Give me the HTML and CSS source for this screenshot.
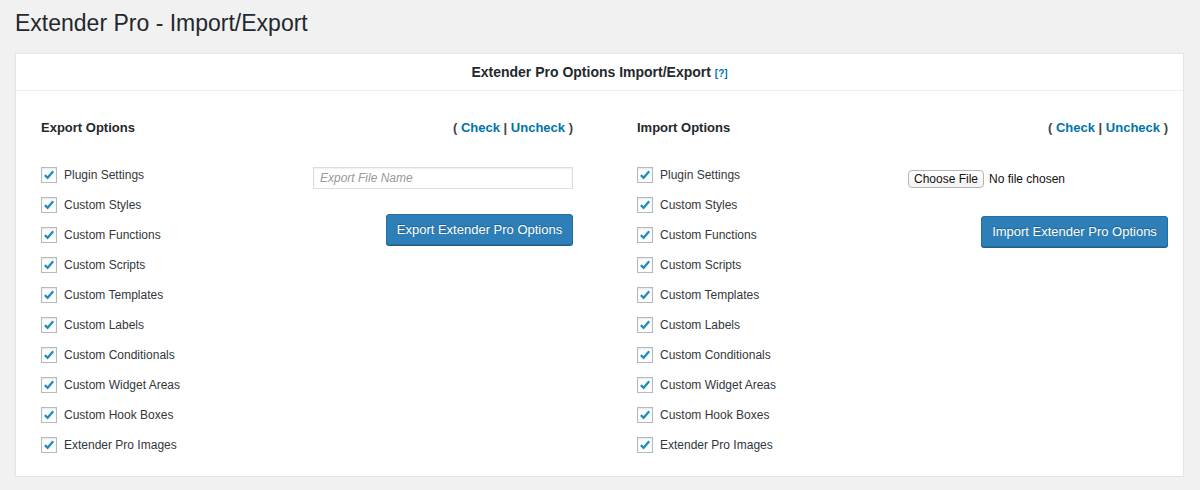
FILE: index.html
```html
<!DOCTYPE html>
<html>
<head>
<meta charset="utf-8">
<link rel="stylesheet" href="styles.css">
</head>
<body>
<div class="wrap">
  <h1 class="page-title">Extender Pro - Import/Export</h1>
  <div class="postbox">
    <div class="postbox-head">Extender Pro Options Import/Export <a class="help" href="#">[?]</a></div>
    <div class="postbox-body">
      <div class="col">
        <div class="col-head">
          <span class="col-title">Export Options</span>
          <span class="toggles">( <a href="#">Check</a> | <a href="#">Uncheck</a> )</span>
        </div>
        <div class="col-body">
          <ul class="opts">
            <li><span class="cb"><svg viewBox="0 0 16 16"><path d="M3.3 8.2 L6.4 11.2 L12.8 3.8"/></svg></span>Plugin Settings</li>
            <li><span class="cb"><svg viewBox="0 0 16 16"><path d="M3.3 8.2 L6.4 11.2 L12.8 3.8"/></svg></span>Custom Styles</li>
            <li><span class="cb"><svg viewBox="0 0 16 16"><path d="M3.3 8.2 L6.4 11.2 L12.8 3.8"/></svg></span>Custom Functions</li>
            <li><span class="cb"><svg viewBox="0 0 16 16"><path d="M3.3 8.2 L6.4 11.2 L12.8 3.8"/></svg></span>Custom Scripts</li>
            <li><span class="cb"><svg viewBox="0 0 16 16"><path d="M3.3 8.2 L6.4 11.2 L12.8 3.8"/></svg></span>Custom Templates</li>
            <li><span class="cb"><svg viewBox="0 0 16 16"><path d="M3.3 8.2 L6.4 11.2 L12.8 3.8"/></svg></span>Custom Labels</li>
            <li><span class="cb"><svg viewBox="0 0 16 16"><path d="M3.3 8.2 L6.4 11.2 L12.8 3.8"/></svg></span>Custom Conditionals</li>
            <li><span class="cb"><svg viewBox="0 0 16 16"><path d="M3.3 8.2 L6.4 11.2 L12.8 3.8"/></svg></span>Custom Widget Areas</li>
            <li><span class="cb"><svg viewBox="0 0 16 16"><path d="M3.3 8.2 L6.4 11.2 L12.8 3.8"/></svg></span>Custom Hook Boxes</li>
            <li><span class="cb"><svg viewBox="0 0 16 16"><path d="M3.3 8.2 L6.4 11.2 L12.8 3.8"/></svg></span>Extender Pro Images</li>
          </ul>
          <div class="controls export-controls">
            <input class="text-input" type="text" placeholder="Export File Name">
            <button class="btn-primary export-btn">Export Extender Pro Options</button>
          </div>
        </div>
      </div>
      <div class="col">
        <div class="col-head">
          <span class="col-title">Import Options</span>
          <span class="toggles">( <a href="#">Check</a> | <a href="#">Uncheck</a> )</span>
        </div>
        <div class="col-body">
          <ul class="opts">
            <li><span class="cb"><svg viewBox="0 0 16 16"><path d="M3.3 8.2 L6.4 11.2 L12.8 3.8"/></svg></span>Plugin Settings</li>
            <li><span class="cb"><svg viewBox="0 0 16 16"><path d="M3.3 8.2 L6.4 11.2 L12.8 3.8"/></svg></span>Custom Styles</li>
            <li><span class="cb"><svg viewBox="0 0 16 16"><path d="M3.3 8.2 L6.4 11.2 L12.8 3.8"/></svg></span>Custom Functions</li>
            <li><span class="cb"><svg viewBox="0 0 16 16"><path d="M3.3 8.2 L6.4 11.2 L12.8 3.8"/></svg></span>Custom Scripts</li>
            <li><span class="cb"><svg viewBox="0 0 16 16"><path d="M3.3 8.2 L6.4 11.2 L12.8 3.8"/></svg></span>Custom Templates</li>
            <li><span class="cb"><svg viewBox="0 0 16 16"><path d="M3.3 8.2 L6.4 11.2 L12.8 3.8"/></svg></span>Custom Labels</li>
            <li><span class="cb"><svg viewBox="0 0 16 16"><path d="M3.3 8.2 L6.4 11.2 L12.8 3.8"/></svg></span>Custom Conditionals</li>
            <li><span class="cb"><svg viewBox="0 0 16 16"><path d="M3.3 8.2 L6.4 11.2 L12.8 3.8"/></svg></span>Custom Widget Areas</li>
            <li><span class="cb"><svg viewBox="0 0 16 16"><path d="M3.3 8.2 L6.4 11.2 L12.8 3.8"/></svg></span>Custom Hook Boxes</li>
            <li><span class="cb"><svg viewBox="0 0 16 16"><path d="M3.3 8.2 L6.4 11.2 L12.8 3.8"/></svg></span>Extender Pro Images</li>
          </ul>
          <div class="controls import-controls">
            <div class="file-row">
              <span class="file-btn">Choose File</span>
              <span class="file-name">No file chosen</span>
            </div>
            <button class="btn-primary import-btn">Import Extender Pro Options</button>
          </div>
        </div>
      </div>
    </div>
  </div>
</div>
</body>
</html>
```

FILE: styles.css
```css
html, body {
  margin: 0;
  padding: 0;
  background: #f1f1f1;
  font-family: "Liberation Sans", Arial, Helvetica, sans-serif;
  color: #444;
}

.wrap {
  padding: 0 16px 0 15px;
}

.page-title {
  margin: 0;
  padding: 9px 0 0;
  height: 44px;
  font-size: 23px;
  font-weight: 400;
  line-height: 29px;
  color: #23282d;
}

.postbox {
  background: #fff;
  border: 1px solid #e5e5e5;
  box-shadow: 0 1px 1px rgba(0, 0, 0, 0.04);
}

.postbox-head {
  height: 36px;
  line-height: 36px;
  border-bottom: 1px solid #eee;
  text-align: center;
  font-size: 14px;
  font-weight: 700;
  color: #23282d;
}

.help {
  font-size: 10px;
  color: #0073aa;
  text-decoration: none;
}

.postbox-body {
  display: grid;
  grid-template-columns: 532px 531px;
  column-gap: 64px;
  padding: 27px 15px 16px 25px;
}

.col-head {
  display: flex;
  justify-content: space-between;
  align-items: center;
  height: 18px;
  font-size: 13px;
  font-weight: 700;
}

.col-title {
  color: #23282d;
}

.toggles {
  color: #444;
}

.toggles a {
  color: #0073aa;
  text-decoration: none;
}

.col-body {
  display: flex;
  justify-content: space-between;
  margin-top: 24px;
}

.opts {
  list-style: none;
  margin: 0;
  padding: 0;
}

.opts li {
  display: flex;
  align-items: center;
  height: 30px;
  font-size: 12px;
  color: #32373c;
}

.cb {
  box-sizing: border-box;
  width: 16px;
  height: 16px;
  margin-right: 7px;
  border: 1px solid #b4b9be;
  background: #fff;
  box-shadow: inset 0 1px 2px rgba(0, 0, 0, 0.1);
  display: flex;
}

.cb svg {
  width: 14px;
  height: 14px;
  fill: none;
  stroke: #1e8cbe;
  stroke-width: 2.6;
  stroke-linecap: butt;
  stroke-linejoin: miter;
}

.controls {
  display: flex;
  flex-direction: column;
  align-items: flex-end;
  width: 260px;
}

.export-controls {
  padding-top: 7px;
}

.text-input {
  box-sizing: border-box;
  width: 260px;
  height: 22px;
  margin: 0;
  padding: 0 6px;
  border: 1px solid #ddd;
  box-shadow: inset 0 1px 2px rgba(0, 0, 0, 0.07);
  font-family: inherit;
  font-size: 12px;
  color: #32373c;
  outline: none;
}

.text-input::placeholder {
  color: #999;
  font-style: italic;
}

.btn-primary {
  box-sizing: border-box;
  height: 31px;
  margin: 0;
  padding: 0 8px;
  background: #2e7fb8;
  border: 1px solid #246ea3;
  border-radius: 3px;
  box-shadow: 0 1px 0 #1f5f8c;
  color: #fff;
  font-family: inherit;
  font-size: 13px;
  white-space: nowrap;
  text-shadow: 0 -1px 1px #1f5f8c;
  cursor: pointer;
}

.export-btn {
  width: 187px;
  margin-top: 25px;
}

.import-controls {
  padding-top: 10px;
}

.file-row {
  display: flex;
  align-items: center;
  width: 260px;
  height: 18px;
}

.file-btn {
  box-sizing: border-box;
  height: 18px;
  width: 76px;
  line-height: 16px;
  text-align: center;
  border: 1px solid #b5b5b5;
  border-radius: 4px;
  background: linear-gradient(#fff, #f3f3f3);
  font-size: 12px;
  color: #111;
}

.file-name {
  margin-left: 5px;
  font-size: 12px;
  color: #111;
}

.import-btn {
  width: 187px;
  margin-top: 28px;
}
```
